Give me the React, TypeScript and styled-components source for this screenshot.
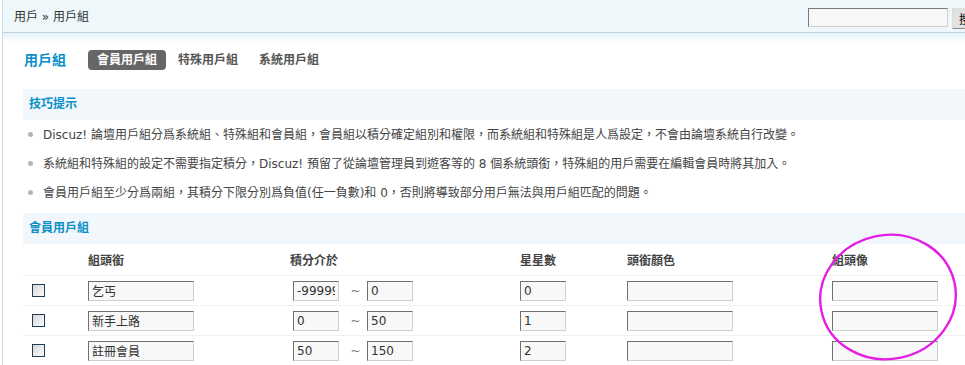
import styled, { createGlobalStyle } from 'styled-components';

const GlobalStyle = createGlobalStyle`
  html, body {
    margin: 0;
    padding: 0;
    overflow: hidden;
    background: #fff;
  }
  body {
    font: 12px/1.5 'DejaVu Sans', 'Noto Sans CJK TC', sans-serif;
    color: #333;
  }
`;

const tips = [
  'Discuz! 論壇用戶組分爲系統組、特殊組和會員組，會員組以積分確定組別和權限，而系統組和特殊組是人爲設定，不會由論壇系統自行改變。',
  '系統組和特殊組的設定不需要指定積分，Discuz! 預留了從論壇管理員到遊客等的 8 個系統頭銜，特殊組的用戶需要在編輯會員時將其加入。',
  '會員用戶組至少分爲兩組，其積分下限分別爲負值(任一負數)和 0，否則將導致部分用戶無法與用戶組匹配的問題。',
];

const groups = [
  { title: '乞丐', low: '-999999999', high: '0', stars: '0' },
  { title: '新手上路', low: '0', high: '50', stars: '1' },
  { title: '註冊會員', low: '50', high: '150', stars: '2' },
];

export default function App() {
  return (
    <>
      <GlobalStyle />
      <StPage>
        <StTopBar>
          <StCrumb>用戶 &raquo; 用戶組</StCrumb>
          <StSearch>
            <StSearchInput type="text" />
            <StSearchButton type="button">搜索</StSearchButton>
          </StSearch>
        </StTopBar>

        <StMain>
          <StItemTitle>
            <StHeading>用戶組</StHeading>
            <StTab active>會員用戶組</StTab>
            <StTab>特殊用戶組</StTab>
            <StTab>系統用戶組</StTab>
          </StItemTitle>

          <StSection>
            <StPartition>技巧提示</StPartition>
            <StTipList>
              {tips.map((tip) => (
                <StTip key={tip}>
                  <StDot />
                  {tip}
                </StTip>
              ))}
            </StTipList>
          </StSection>

          <StSection gap={6}>
            <StPartition>會員用戶組</StPartition>
            <StHeadRow>
              <span />
              <span>組頭銜</span>
              <span>積分介於</span>
              <span>星星數</span>
              <span>頭銜顏色</span>
              <span>組頭像</span>
            </StHeadRow>
            {groups.map((g) => (
              <StRow key={g.title}>
                <StCell>
                  <StCheck type="checkbox" />
                </StCell>
                <StCell>
                  <StInput size="wide" defaultValue={g.title} />
                </StCell>
                <StCell>
                  <StInput size="small" defaultValue={g.low} style={{ marginLeft: 3 }} />
                  <StTilde>~</StTilde>
                  <StInput size="small" defaultValue={g.high} />
                </StCell>
                <StCell>
                  <StInput size="small" defaultValue={g.stars} />
                </StCell>
                <StCell>
                  <StInput size="wide" />
                </StCell>
                <StCell>
                  <StInput size="wide" />
                </StCell>
              </StRow>
            ))}
          </StSection>
        </StMain>

        <StMark width="146" height="132" viewBox="0 0 146 132">
          <ellipse
            cx="73"
            cy="66"
            rx="68"
            ry="62"
            transform="rotate(-12 73 66)"
            fill="none"
            stroke="#e41ee4"
            strokeWidth="2.4"
          />
        </StMark>
      </StPage>
    </>
  );
}

const StPage = styled.div`
  position: relative;
  width: 1000px;
  min-height: 365px;
  margin-left: 2px;
  border-left: 1px solid #c8dce8;
`;

const StTopBar = styled.div`
  display: flex;
  align-items: center;
  justify-content: space-between;
  height: 32px;
  padding: 0 13px 0 11px;
  background: #eef8fa;
  border-bottom: 1px solid #b8d4e0;
`;

const StCrumb = styled.span`
  color: #333;
  padding-top: 1px;
`;

const StSearch = styled.div`
  display: flex;
  align-items: center;
  gap: 4px;
  padding-top: 2px;
`;

const StSearchInput = styled.input`
  box-sizing: border-box;
  width: 140px;
  height: 19px;
  border: 1px solid;
  border-color: #7a7a7a #d0d0d0 #d0d0d0 #7a7a7a;
  background: #f7f7f7;
`;

const StSearchButton = styled.button`
  height: 21px;
  padding: 0 6px;
  margin-top: 2px;
  border: 1px solid;
  border-color: #ddd #888 #888 #ddd;
  background: #e2e2e2;
  font: 12px 'Noto Sans CJK TC', sans-serif;
  color: #000;
`;

const StMain = styled.div`
  padding: 17px 0 0 20px;
  background: linear-gradient(#e6f2f7, #fff 10px) no-repeat;
`;

const StItemTitle = styled.div`
  display: flex;
  align-items: center;
  height: 20px;
`;

const StHeading = styled.h3`
  margin: 0 22px 0 1px;
  font-size: 14px;
  font-weight: bold;
  color: #0a8fc6;
`;

const StTab = styled.span<{ active?: boolean }>`
  height: 20px;
  line-height: 20px;
  padding: 0 9px;
  margin-right: 3px;
  border-radius: 4px;
  font-weight: bold;
  color: ${({ active }) => (active ? '#fff' : '#555')};
  background: ${({ active }) => (active ? '#666' : 'transparent')};
`;

const StSection = styled.div<{ gap?: number }>`
  margin-top: ${({ gap }) => gap ?? 19}px;
`;

const StPartition = styled.div`
  height: 31px;
  line-height: 31px;
  padding-left: 6px;
  background: #f2f7fc;
  color: #0a8fc6;
  font-weight: bold;
`;

const StTipList = styled.ul`
  margin: 0;
  padding: 0;
  list-style: none;
`;

const StTip = styled.li`
  display: flex;
  align-items: center;
  height: 29px;
  padding-left: 5px;
  color: #444;
  white-space: nowrap;
`;

const StDot = styled.i`
  width: 5px;
  height: 5px;
  margin-right: 10px;
  border-radius: 50%;
  background: #b4b4b4;
`;

const cols = '65px 202px 230px 107px 205px 1fr';

const StHeadRow = styled.div`
  display: grid;
  grid-template-columns: ${cols};
  align-items: center;
  height: 32px;
  padding-top: 2px;
  box-sizing: border-box;
  border-bottom: 1px solid #edf1f4;
  font-weight: bold;
  color: #444;
`;

const StRow = styled.div`
  display: grid;
  grid-template-columns: ${cols};
  align-items: center;
  height: 29px;
  border-bottom: 1px solid #edf1f4;
`;

const StCell = styled.div`
  display: flex;
  align-items: center;
`;

const StCheck = styled.input`
  appearance: none;
  box-sizing: border-box;
  width: 13px;
  height: 13px;
  margin: 0 0 0 9px;
  border: 1px solid #1f3c58;
  background: linear-gradient(135deg, #d8d8d8, #fbfbfb);
`;

const StInput = styled.input<{ size: 'wide' | 'small' }>`
  box-sizing: border-box;
  width: ${({ size }) => (size === 'wide' ? 106 : 46)}px;
  height: 20px;
  padding: 0 3px;
  border: 1px solid;
  border-color: #707070 #cfcfcf #cfcfcf #707070;
  background: #f8f8f8;
  font: 12px 'DejaVu Sans', 'Noto Sans CJK TC', sans-serif;
  color: #333;
`;

const StTilde = styled.span`
  width: 28px;
  padding-left: 5px;
  box-sizing: border-box;
  text-align: center;
  color: #777;
`;

const StMark = styled.svg`
  position: absolute;
  left: 812px;
  top: 231px;
  pointer-events: none;
`;
